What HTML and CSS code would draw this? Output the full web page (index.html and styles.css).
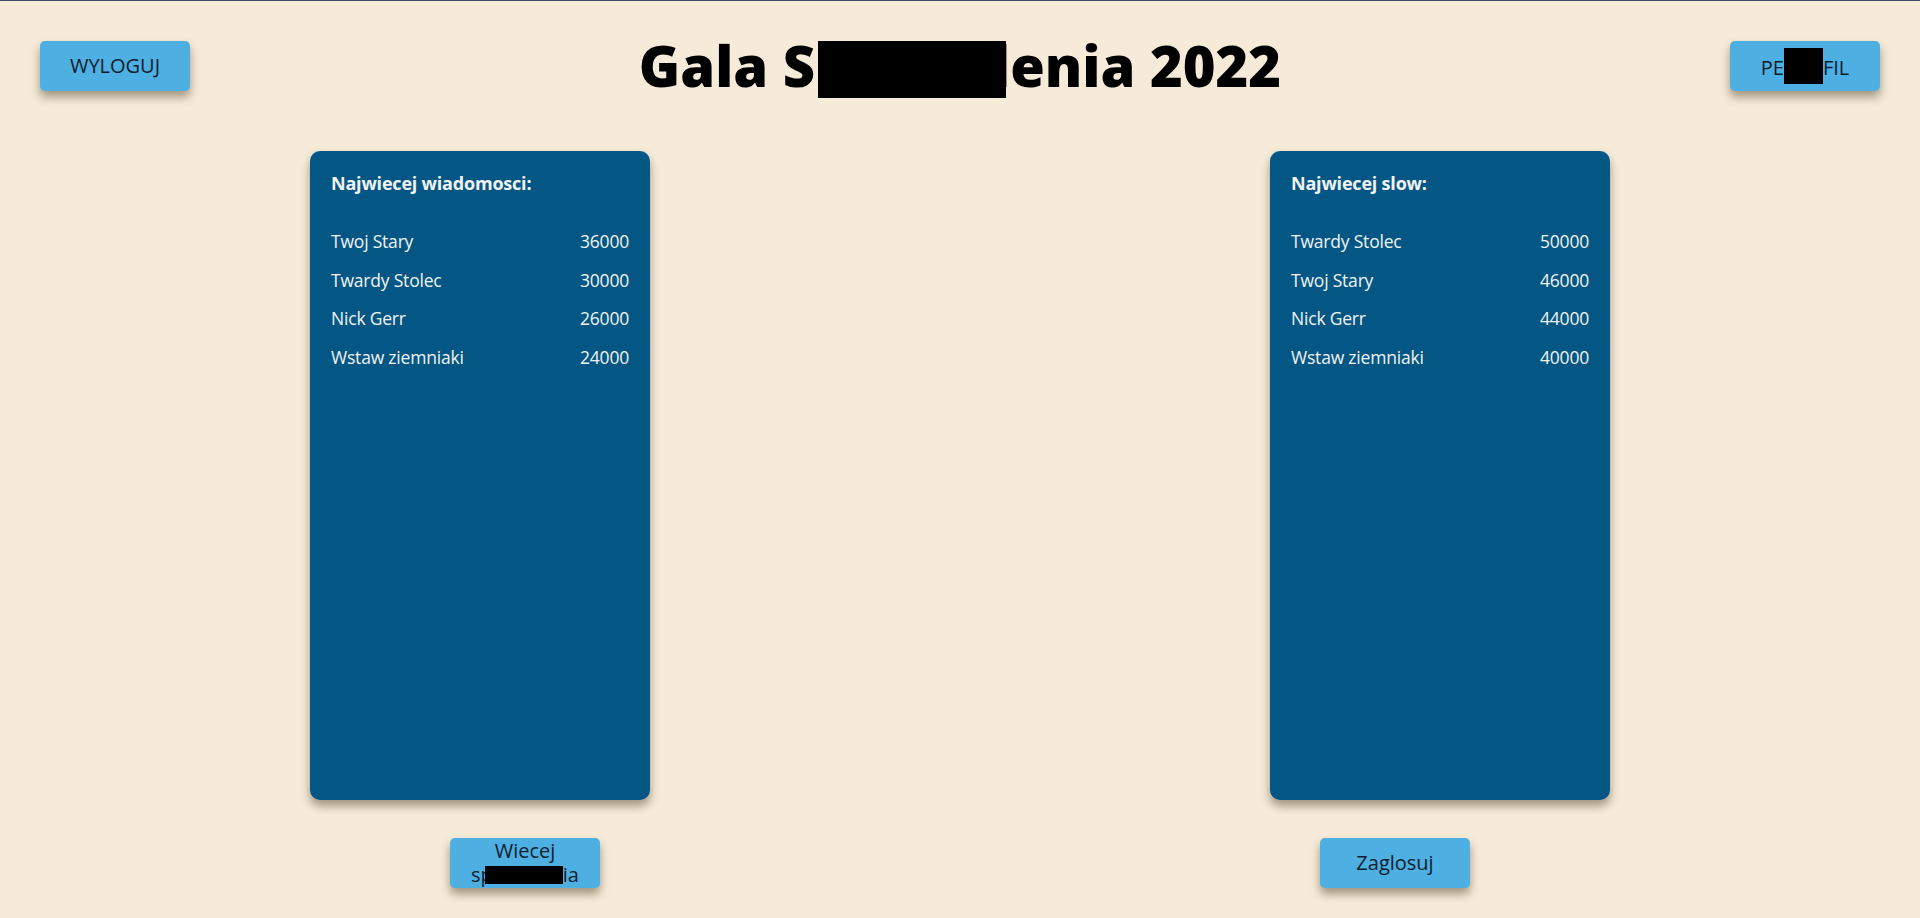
FILE: index.html
```html
<!DOCTYPE html>
<html lang="pl">
<head>
<meta charset="utf-8">
<title>Gala 2022</title>
<link rel="stylesheet" href="styles.css">
</head>
<body>
<div class="topline"></div>
<header class="header">
  <button class="btn">WYLOGUJ</button>
  <h1 class="title">Gala S<span class="redact redact-title"></span>lenia 2022</h1>
  <button class="btn">PE<span class="redact redact-perfil"></span>FIL</button>
</header>
<main class="boards">
  <section class="card">
    <h2 class="card-title">Najwiecej wiadomosci:</h2>
    <ul class="rank">
      <li class="row"><span>Twoj Stary</span><span>36000</span></li>
      <li class="row"><span>Twardy Stolec</span><span>30000</span></li>
      <li class="row"><span>Nick Gerr</span><span>26000</span></li>
      <li class="row"><span>Wstaw ziemniaki</span><span>24000</span></li>
    </ul>
  </section>
  <section class="card">
    <h2 class="card-title">Najwiecej slow:</h2>
    <ul class="rank">
      <li class="row"><span>Twardy Stolec</span><span>50000</span></li>
      <li class="row"><span>Twoj Stary</span><span>46000</span></li>
      <li class="row"><span>Nick Gerr</span><span>44000</span></li>
      <li class="row"><span>Wstaw ziemniaki</span><span>40000</span></li>
    </ul>
  </section>
</main>
<footer class="actions">
  <button class="btn btn-two">Wiecej<br>sp<span class="redact redact-more"></span>ia</button>
  <button class="btn">Zaglosuj</button>
</footer>
</body>
</html>
```

FILE: styles.css
```css
html, body {
  margin: 0;
  padding: 0;
}
body {
  background: #f5ebd8;
  font-family: "Open Sans", "Noto Sans", sans-serif;
  height: 918px;
  overflow: hidden;
}
.topline {
  height: 1px;
  background: #3b4a6b;
}
.header {
  display: grid;
  grid-template-columns: 150px 1fr 150px;
  align-items: start;
  padding: 40px 40px 0;
}
.btn {
  width: 150px;
  height: 50px;
  border: none;
  border-radius: 5px;
  background: #4eafe3;
  color: #0c1d2b;
  font-family: "Open Sans", "Noto Sans", sans-serif;
  font-size: 20px;
  line-height: 24px;
  padding: 0;
  box-shadow: 0 6px 10px rgba(60, 45, 20, 0.45);
  cursor: pointer;
}
.title {
  margin: 0;
  height: 50px;
  text-align: center;
  white-space: nowrap;
  font-family: "Open Sans", "Noto Sans", sans-serif;
  font-weight: 800;
  font-size: 56px;
  line-height: 48px;
  color: #000;
}
.redact {
  display: inline-block;
  background: #000;
}
.redact-title {
  width: 188px;
  height: 57px;
  margin: 0 -14px 0 3px;
  vertical-align: -11px;
}
.redact-perfil {
  width: 39px;
  height: 36px;
  vertical-align: -9px;
}
.redact-more {
  width: 78px;
  height: 18px;
  margin-left: -8px;
  vertical-align: -2px;
}
.boards {
  display: grid;
  grid-template-columns: 1fr 1fr;
  padding-top: 60px;
}
.card {
  justify-self: center;
  width: 340px;
  height: 649px;
  box-sizing: border-box;
  padding: 20px 21px;
  background: #045784;
  border-radius: 10px;
  box-shadow: 0 6px 10px rgba(60, 45, 20, 0.45);
  color: #f2f2f2;
}
.card-title {
  margin: 0;
  font-size: 18px;
  font-weight: 700;
  letter-spacing: -0.2px;
  line-height: 24px;
}
.rank {
  list-style: none;
  margin: 34px 0 0;
  padding: 0;
}
.row {
  display: flex;
  justify-content: space-between;
  font-size: 17.5px;
  letter-spacing: -0.2px;
  line-height: 24px;
  margin-bottom: 14.5px;
}
.actions {
  display: flex;
  justify-content: space-around;
  padding: 38px 90px 0;
}
```
